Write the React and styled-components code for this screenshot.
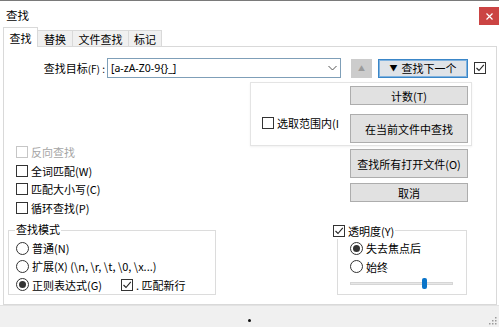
import React from 'react';
import styled, { createGlobalStyle } from 'styled-components';

const Global = createGlobalStyle`
  html, body { margin: 0; padding: 0; background: #fff; }
  body {
    font-family: "Noto Sans CJK SC", "Microsoft YaHei", sans-serif;
    font-size: 11px;
    color: #000;
  }
  * { box-sizing: border-box; }
`;

const Window = styled.div`
  width: 499px;
  height: 327px;
  border-top: 1px solid #7a7a7a;
  display: flex;
  flex-direction: column;
  background: #fff;
  overflow: hidden;
`;

const TitleBar = styled.div`
  height: 26px;
  display: flex;
  justify-content: space-between;
  align-items: flex-start;
  padding-left: 6px;
`;

const Title = styled.div`
  margin-top: 6px;
  font-size: 11.5px;
  line-height: 16px;
`;

const CloseButton = styled.div`
  margin-top: 6px;
  width: 20px;
  height: 18px;
  background: #cb4443;
  display: flex;
  align-items: center;
  justify-content: center;
`;

const TabRow = styled.div`
  height: 19px;
  display: flex;
  align-items: flex-end;
  margin-left: 3px;
  position: relative;
  z-index: 1;
`;

const Tab = styled.div`
  height: ${p => (p.$active ? '20px' : '16px')};
  margin-bottom: ${p => (p.$active ? '-1px' : '0')};
  background: ${p => (p.$active ? '#fff' : '#f0f0f0')};
  border: 1px solid #d9d9d9;
  border-bottom: none;
  border-left: ${p => (p.$first ? '1px solid #d9d9d9' : 'none')};
  width: ${p => p.$w}px;
  display: flex;
  align-items: center;
  justify-content: center;
  line-height: 14px;
  padding-top: ${p => (p.$active ? '0' : '1px')};
`;

const Panel = styled.div`
  height: 259px;
  margin: 0 2px 0 3px;
  border: 1px solid #d9d9d9;
  background: #fff;
  display: flex;
  flex-direction: column;
`;

const SearchRow = styled.div`
  margin-top: 11px;
  height: 20px;
  display: flex;
  align-items: center;
  padding-left: 36px;
`;

const FieldLabel = styled.div`
  width: 67px;
  display: flex;
  justify-content: flex-end;
  align-items: baseline;
  white-space: nowrap;
  padding-right: 2px;
`;

const Small = styled.span`
  font-size: 10px;
`;

const Combo = styled.div`
  width: 234px;
  height: 20px;
  border: 1px solid #7f9fb8;
  display: flex;
  align-items: center;
  justify-content: space-between;
  padding: 0 3px 0 3px;
  font-family: "Noto Sans", "DejaVu Sans", sans-serif;
  font-size: 10.5px;
`;

const UpButton = styled.div`
  margin-left: 10px;
  width: 21px;
  height: 19px;
  background: #cccccc;
  display: flex;
  align-items: center;
  justify-content: center;
  font-size: 7px;
  color: #9b9b9b;
`;

const NextButton = styled.div`
  margin-left: 6px;
  width: 90px;
  height: 19px;
  background: #dfe3e8;
  border: 1px solid #3a86c8;
  box-shadow: inset 0 0 0 1px #7fb2df;
  display: flex;
  align-items: center;
  justify-content: center;
  gap: 4px;
  line-height: 14px;
`;

const Tri = styled.span`
  font-size: 8px;
`;

const Box = styled.span`
  flex: none;
  width: 12px;
  height: 12px;
  border: 1px solid ${p => (p.$disabled ? '#c6c6c6' : '#333')};
  background: #fff;
  display: inline-flex;
  align-items: center;
  justify-content: center;
`;

const Circle = styled.span`
  flex: none;
  width: 13px;
  height: 13px;
  border-radius: 50%;
  border: 1px solid #333;
  background: #fff;
  display: inline-flex;
  align-items: center;
  justify-content: center;
  &::after {
    content: '';
    display: ${p => (p.$on ? 'block' : 'none')};
    width: 7px;
    height: 7px;
    border-radius: 50%;
    background: #333;
  }
`;

const Item = styled.div`
  display: flex;
  align-items: center;
  gap: 3px;
  height: ${p => p.$h || 18.5}px;
  white-space: nowrap;
  color: ${p => (p.$disabled ? '#a5a5a5' : '#000')};
  width: ${p => (p.$w ? p.$w + 'px' : 'auto')};
  line-height: 14px;
`;

const Middle = styled.div`
  margin-top: 4px;
  display: flex;
`;

const LeftCol = styled.div`
  width: 246px;
  padding: 61px 0 0 12px;
  display: flex;
  flex-direction: column;
`;

const RightCol = styled.div`
  display: flex;
  flex-direction: column;
`;

const SelectionBox = styled.div`
  width: 222px;
  height: 64px;
  border: 1px solid #e4e4e4;
  box-shadow: 0 1px 2px rgba(0, 0, 0, 0.06);
  display: flex;
`;

const SelArea = styled.div`
  width: 99px;
  padding: 17px 0 0 11px;
  display: flex;
  align-items: center;
  overflow: hidden;
`;

const ButtonStack = styled.div`
  display: flex;
  flex-direction: column;
  gap: 9px;
  padding-top: 3px;
`;

const Button = styled.div`
  width: 118px;
  height: ${p => p.$h}px;
  margin-left: ${p => p.$ml || 0}px;
  margin-top: ${p => p.$mt || 0}px;
  background: #e1e1e1;
  border: 1px solid #adadad;
  display: flex;
  align-items: center;
  justify-content: center;
  line-height: 14px;
  white-space: nowrap;
`;

const BottomRow = styled.div`
  margin-top: 4px;
  display: flex;
`;

const Group = styled.div`
  display: flex;
  flex-direction: column;
  margin-left: ${p => p.$ml}px;
`;

const GroupTitle = styled.div`
  position: relative;
  z-index: 1;
  align-self: flex-start;
  height: 16px;
  margin-top: ${p => p.$mt || 0}px;
  margin-left: ${p => p.$ml || 0}px;
  padding: 0 1px;
  background: #fff;
  display: flex;
  align-items: center;
  gap: 3px;
  line-height: 14px;
`;

const GroupBox = styled.div`
  width: ${p => p.$w}px;
  height: 65px;
  margin-top: ${p => p.$mt}px;
  margin-left: ${p => p.$ml || 0}px;
  border: 1px solid #dcdcdc;
  padding: 8px 0 0 ${p => p.$pl}px;
  display: flex;
  flex-direction: column;
`;

const Row = styled.div`
  display: flex;
  align-items: center;
`;

const SliderRow = styled.div`
  height: 15px;
  display: flex;
  align-items: center;
`;

const Track = styled.div`
  position: relative;
  width: 103px;
  height: 3px;
  background: #e7e7e7;
  border: 1px solid #d6d6d6;
`;

const Thumb = styled.div`
  position: absolute;
  top: -5px;
  width: 5px;
  height: 11px;
  border-radius: 2px;
  background: #0a74c9;
`;

const StatusBar = styled.div`
  height: 22px;
  background: #f0f0f0;
  border-top: 1px solid #e2e2e2;
  position: relative;
  display: flex;
  justify-content: center;
  padding-top: 13px;
`;

const Dot = styled.div`
  width: 3px;
  height: 3px;
  border-radius: 50%;
  background: #111;
`;

const Grip = styled.svg`
  position: absolute;
  right: 2px;
  bottom: 2px;
`;

const Check = () => (
  <svg width="10" height="10" viewBox="0 0 10 10">
    <path d="M1.5 5 L4 7.5 L8.8 1.8" fill="none" stroke="#222" strokeWidth="1.1" />
  </svg>
);

const CheckBox = ({ checked, disabled }) => (
  <Box $disabled={disabled}>{checked && <Check />}</Box>
);

export default function App() {
  return (
    <>
      <Global />
      <Window>
        <TitleBar>
          <Title>查找</Title>
          <CloseButton>
            <svg width="7" height="7" viewBox="0 0 7 7">
              <path d="M0.5 0.5 L6.5 6.5 M6.5 0.5 L0.5 6.5" stroke="#fff" strokeWidth="1.2" />
            </svg>
          </CloseButton>
        </TitleBar>
        <TabRow>
          <Tab $active $first $w={35}>查找</Tab>
          <Tab $w={35}>替换</Tab>
          <Tab $w={56}>文件查找</Tab>
          <Tab $w={33}>标记</Tab>
        </TabRow>
        <Panel>
          <SearchRow>
            <FieldLabel>
              查找目标<Small>(F) :</Small>
            </FieldLabel>
            <Combo>
              <span>[a-zA-Z0-9{'{}'}_]</span>
              <svg width="9" height="6" viewBox="0 0 9 6">
                <path d="M0.5 1 L4.5 5 L8.5 1" fill="none" stroke="#555" strokeWidth="1" />
              </svg>
            </Combo>
            <UpButton>▲</UpButton>
            <NextButton>
              <Tri>▼</Tri>
              <span>查找下一个</span>
            </NextButton>
            <Item style={{ marginLeft: 6 }} $h={20}>
              <CheckBox checked />
            </Item>
          </SearchRow>
          <Middle>
            <LeftCol>
              <Item $disabled>
                <CheckBox disabled />
                反向查找
              </Item>
              <Item>
                <CheckBox />
                全词匹配(W)
              </Item>
              <Item>
                <CheckBox />
                匹配大小写(C)
              </Item>
              <Item>
                <CheckBox />
                循环查找(P)
              </Item>
            </LeftCol>
            <RightCol>
              <SelectionBox>
                <SelArea>
                  <Item>
                    <CheckBox />
                    选取范围内(I
                  </Item>
                </SelArea>
                <ButtonStack>
                  <Button $h={19}>计数(T)</Button>
                  <Button $h={29}>在当前文件中查找</Button>
                </ButtonStack>
              </SelectionBox>
              <Button $h={29} $ml={100} $mt={3}>查找所有打开文件(O)</Button>
              <Button $h={19} $ml={100} $mt={5}>取消</Button>
            </RightCol>
          </Middle>
          <BottomRow>
            <Group $ml={4}>
              <GroupTitle $ml={7}>查找模式</GroupTitle>
              <GroupBox $w={208} $mt={-7} $pl={7}>
                <Item>
                  <Circle />
                  普通(N)
                </Item>
                <Item>
                  <Circle />
                  扩展(X) (\n, \r, \t, \0, \x...)
                </Item>
                <Row>
                  <Item $w={105}>
                    <Circle $on />
                    正则表达式(G)
                  </Item>
                  <Item>
                    <CheckBox checked />
                    . 匹配新行
                  </Item>
                </Row>
              </GroupBox>
            </Group>
            <Group $ml={116}>
              <GroupTitle $mt={2}>
                <CheckBox checked />
                透明度(Y)
              </GroupTitle>
              <GroupBox $w={130} $mt={-9} $ml={5} $pl={12}>
                <Item>
                  <Circle $on />
                  失去焦点后
                </Item>
                <Item>
                  <Circle />
                  始终
                </Item>
                <SliderRow>
                  <Track>
                    <Thumb style={{ left: `${Math.round(103 * 0.69)}px` }} />
                  </Track>
                </SliderRow>
              </GroupBox>
            </Group>
          </BottomRow>
        </Panel>
        <StatusBar>
          <Dot />
          <Grip width="8" height="8" viewBox="0 0 8 8">
            <rect x="6" y="0" width="1.5" height="1.5" fill="#9a9a9a" />
            <rect x="3" y="3" width="1.5" height="1.5" fill="#9a9a9a" />
            <rect x="6" y="3" width="1.5" height="1.5" fill="#9a9a9a" />
            <rect x="0" y="6" width="1.5" height="1.5" fill="#9a9a9a" />
            <rect x="3" y="6" width="1.5" height="1.5" fill="#9a9a9a" />
            <rect x="6" y="6" width="1.5" height="1.5" fill="#9a9a9a" />
          </Grip>
        </StatusBar>
      </Window>
    </>
  );
}
